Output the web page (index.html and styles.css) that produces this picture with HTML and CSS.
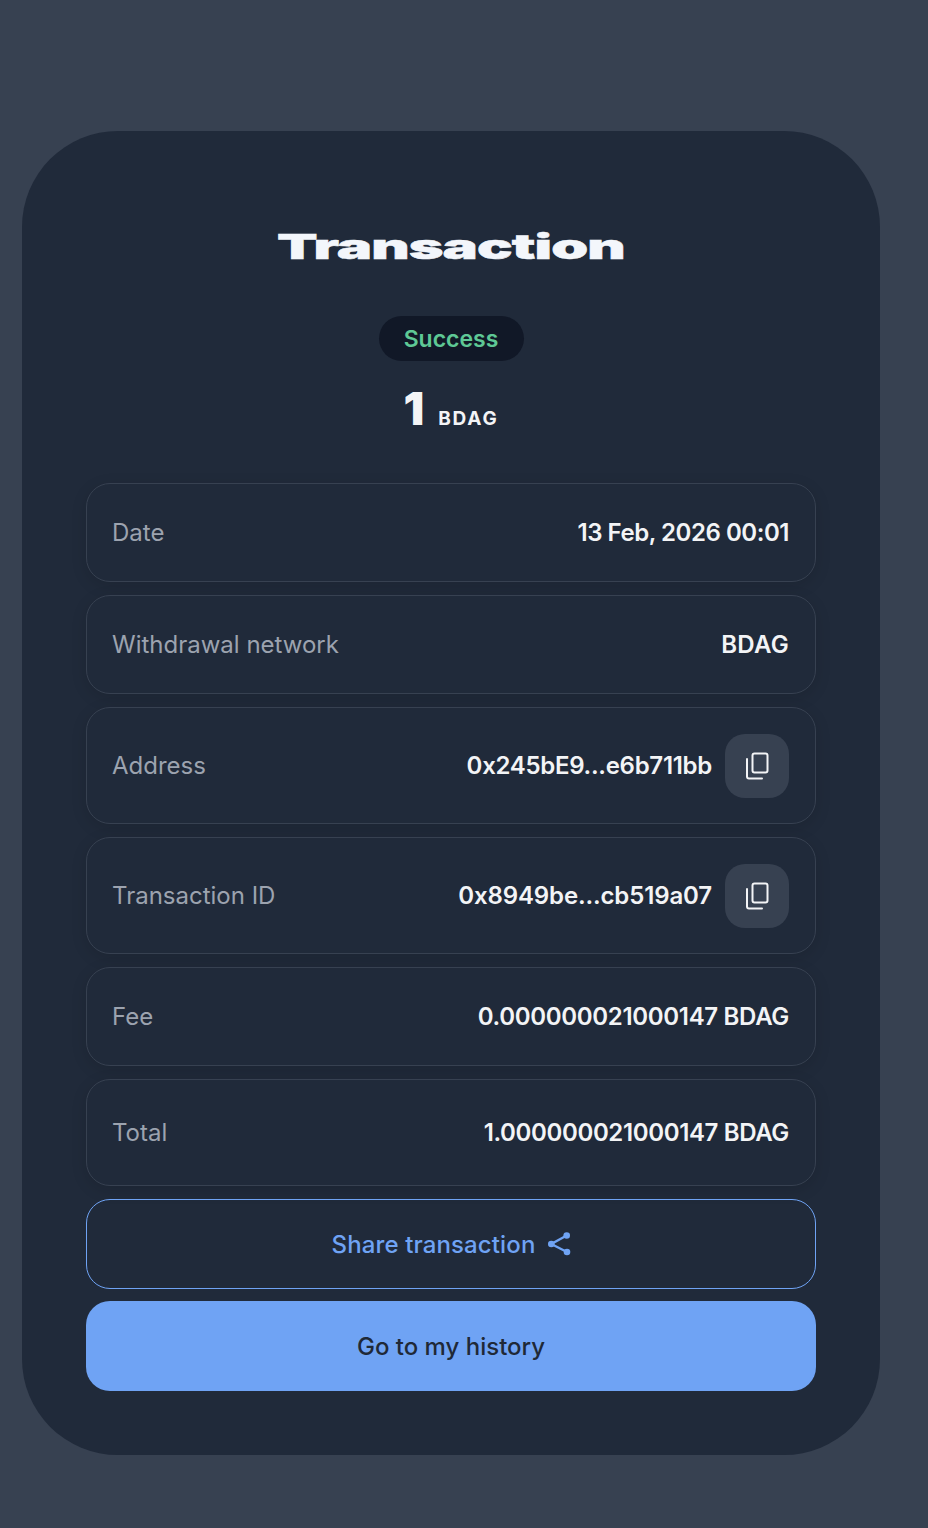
FILE: index.html
```html
<!DOCTYPE html>
<html lang="en">
<head>
<meta charset="utf-8">
<title>Transaction</title>
<link rel="stylesheet" href="styles.css">
</head>
<body>
<main class="card">
  <h1 class="title"><span class="title-text">Transaction</span></h1>
  <div class="status">Success</div>
  <div class="amount"><span class="amount-num">1</span><span class="amount-unit">BDAG</span></div>
  <div class="rows">
    <div class="row row-a"><span class="label">Date</span><span class="value v-date">13 Feb, 2026 00:01</span></div>
    <div class="row row-b"><span class="label">Withdrawal network</span><span class="value v-net">BDAG</span></div>
    <div class="row row-c"><span class="label">Address</span><div class="value-wrap"><span class="value v-addr">0x245bE9...e6b711bb</span>
      <button class="copy" type="button" aria-label="Copy"><svg class="copy-icon" viewBox="0 0 24 28" fill="none" stroke="currentColor" stroke-width="2" stroke-linecap="round" stroke-linejoin="round"><rect x="7.5" y="1.5" width="15" height="19" rx="2"/><path d="M2 7V24.500a2 2 0 0 0 2 2H17"/></svg></button></div></div>
    <div class="row row-c"><span class="label">Transaction ID</span><div class="value-wrap"><span class="value v-tx">0x8949be...cb519a07</span>
      <button class="copy" type="button" aria-label="Copy"><svg class="copy-icon" viewBox="0 0 24 28" fill="none" stroke="currentColor" stroke-width="2" stroke-linecap="round" stroke-linejoin="round"><rect x="7.5" y="1.5" width="15" height="19" rx="2"/><path d="M2 7V24.500a2 2 0 0 0 2 2H17"/></svg></button></div></div>
    <div class="row row-a"><span class="label">Fee</span><span class="value v-fee">0.000000021000147 BDAG</span></div>
    <div class="row row-d"><span class="label">Total</span><span class="value v-total">1.000000021000147 BDAG</span></div>
  </div>
  <button class="btn btn-share" type="button"><span class="share-text">Share transaction</span><svg class="share-icon" viewBox="0 0 24 24" fill="currentColor" stroke="none"><path d="M18.700 3.500 3.300 12 19 20" fill="none" stroke="currentColor" stroke-width="2.400"/><circle cx="18.700" cy="3.500" r="3.300"/><circle cx="3.300" cy="12" r="3.300"/><circle cx="19" cy="20" r="3.300"/></svg></button>
  <button class="btn btn-primary" type="button">Go to my history</button>
</main>
</body>
</html>
```
FILE: styles.css
```css
* { box-sizing: border-box; }
html, body { margin: 0; }
body {
  width: 928px;
  height: 1528px;
  padding: 131px 48px 73px 22px;
  background: #374151;
  font-family: Inter, "Liberation Sans", sans-serif;
  overflow: hidden;
}
.card {
  height: 1324px;
  padding: 96px 64px 64px;
  background: #202a3a;
  border-radius: 96px;
  display: flex;
  flex-direction: column;
  align-items: stretch;
}
.title {
  margin: 0;
  height: 40px;
  display: flex;
  justify-content: center;
  align-items: center;
  color: #f3f6fb;
  font: 900 34px/40px Inter, sans-serif;
}
.title-text {
  display: inline-block;
  transform: scaleX(1.74);
  letter-spacing: -.5px;
  -webkit-text-stroke: .5px #f3f6fb;
}
.status {
  align-self: center;
  margin-top: 49px;
  width: 145px;
  height: 45px;
  border-radius: 23px;
  background: #111827;
  color: #5ec895;
  font-size: 23px;
  font-weight: 600;
  line-height: 47px;
  text-align: center;
}
.amount {
  margin-top: 17px;
  height: 60px;
  display: flex;
  justify-content: center;
  align-items: baseline;
  gap: 14px;
  color: #f3f4f6;
}
.amount-num { font-size: 46px; font-weight: 900; line-height: 60px; }
.amount-unit { font-size: 19px; font-weight: 700; letter-spacing: 1.800px; }
.rows {
  margin-top: 45px;
  display: flex;
  flex-direction: column;
  gap: 13px;
}
.row {
  display: flex;
  justify-content: space-between;
  align-items: center;
  padding: 0 26px;
  background: #202a3a;
  border: 1px solid #374151;
  border-radius: 24px;
  box-shadow: 0 4px 16px rgba(0, 0, 0, .12);
}
.row-a { height: 99px; }
.row-b { height: 99px; }
.row-c { height: 117px; }
.row-d { height: 107px; }
.label { color: #9ca3af; font-size: 24px; font-weight: 400; margin-left: -1px; }
.value { color: #f3f4f6; font-size: 24px; font-weight: 600; white-space: nowrap; }
.v-date { letter-spacing: -.45px; }
.v-net { letter-spacing: .25px; }
.v-addr { letter-spacing: -.29px; }
.v-tx { letter-spacing: -.13px; }
.v-fee { letter-spacing: -.32px; }
.v-total { letter-spacing: -.36px; }
.value-wrap { display: flex; align-items: center; gap: 13px; }
.copy {
  width: 64px;
  height: 64px;
  padding: 0;
  border: 0;
  border-radius: 20px;
  background: #374151;
  color: #f3f4f6;
  display: flex;
  align-items: center;
  justify-content: center;
}
.copy-icon { width: 24px; height: 28px; }
.btn {
  width: 100%;
  height: 90px;
  border-radius: 24px;
  font-family: Inter, sans-serif;
  font-size: 24px;
  font-weight: 500;
  display: flex;
  align-items: center;
  justify-content: center;
}
.btn-share {
  margin-top: 13px;
  gap: 13px;
  background: transparent;
  border: 1px solid #6fa3f4;
  color: #6fa3f4;
}
.share-text { letter-spacing: .12px; margin-left: 2px; }
.share-icon { width: 24px; height: 24px; }
.btn-primary {
  margin-top: 12px;
  background: #6fa3f4;
  border: 0;
  color: #1f2937;
}
```
